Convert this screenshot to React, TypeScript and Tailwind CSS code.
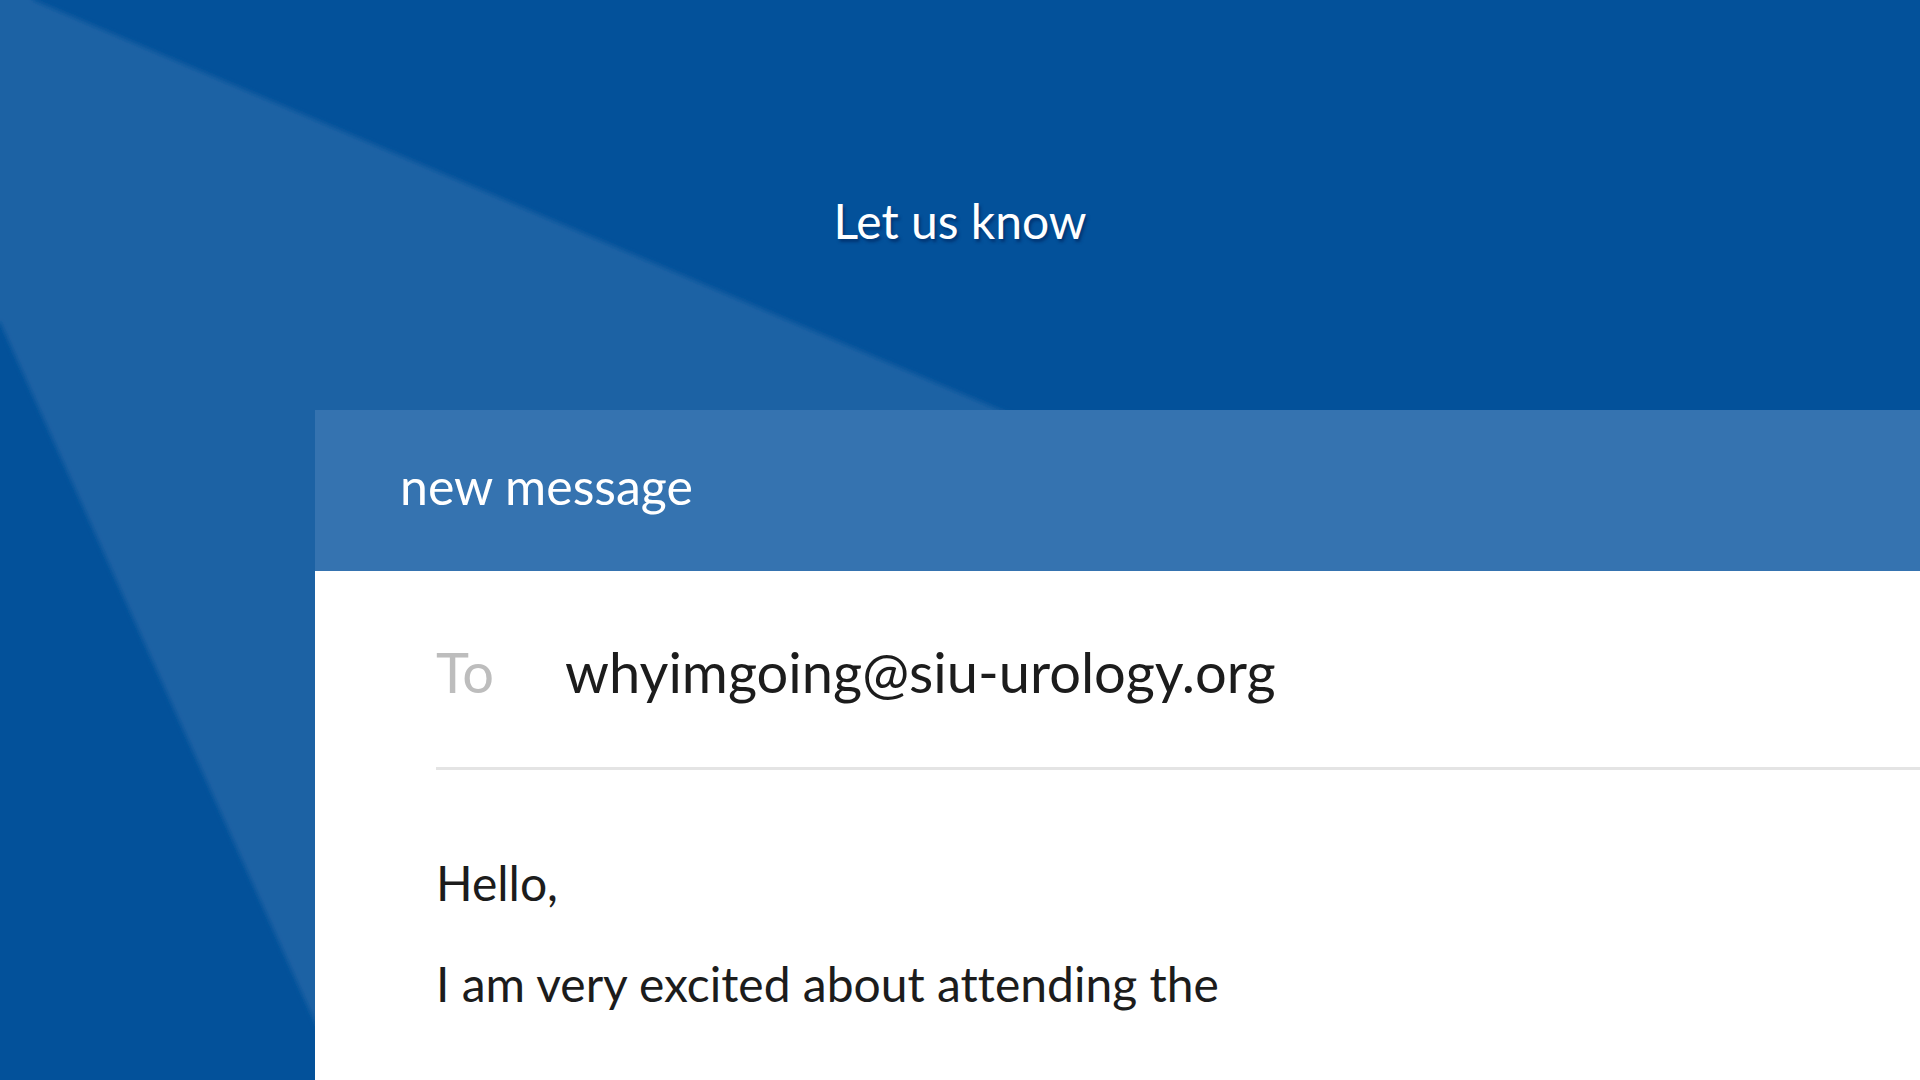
import React from "react";

const sans = "font-['Lato','Noto_Sans',sans-serif] [font-variant-ligatures:none]";

function Beam() {
  // soft light wedge coming from the top-left corner
  return (
    <svg className="absolute inset-0 h-full w-full" viewBox="0 0 1920 1080" preserveAspectRatio="none">
      <defs>
        <filter id="soft" x="-5%" y="-5%" width="110%" height="110%">
          <feGaussianBlur stdDeviation="2.5" />
        </filter>
      </defs>
      <polygon points="-20,-20 30,-20 33,0 1920,800 1920,1100 350,1100 0,322 -20,322" fill="#1b62a4" filter="url(#soft)" />
    </svg>
  );
}

export default function App() {
  return (
    <div className={`relative h-screen w-full overflow-hidden bg-[#03519a] ${sans}`}>
      <Beam />
      <div className="relative flex h-full flex-col">
        <div className="pt-[197px] h-[410px] text-center">
          <h1 className="text-[48px] leading-none text-white [text-shadow:2px_3px_3px_rgba(0,35,90,0.6)]">
            Let us know
          </h1>
        </div>

        <div className="ml-[315px] flex-1 bg-white">
          <div className="h-[161px] bg-[#3573b0] pl-[85px] pt-[51px]">
            <span className="text-[50px] leading-none text-white">new message</span>
          </div>

          <div className="pl-[121px] pt-[73px]">
            <div className="flex items-start text-[56px] leading-none">
              <span className="w-[129px] text-[#bdbdbd]">To</span>
              <span className="text-[#1c1c1c]">whyimgoing@siu-urology.org</span>
            </div>
            <div className="mt-[67px] h-[3px] bg-[#e4e4e4]" />
            <p className="mt-[89px] text-[48px] leading-none text-[#1c1c1c]">Hello,</p>
            <p className="mt-[53px] text-[48px] leading-none text-[#1c1c1c]">I am very excited about attending the</p>
          </div>
        </div>
      </div>
    </div>
  );
}
